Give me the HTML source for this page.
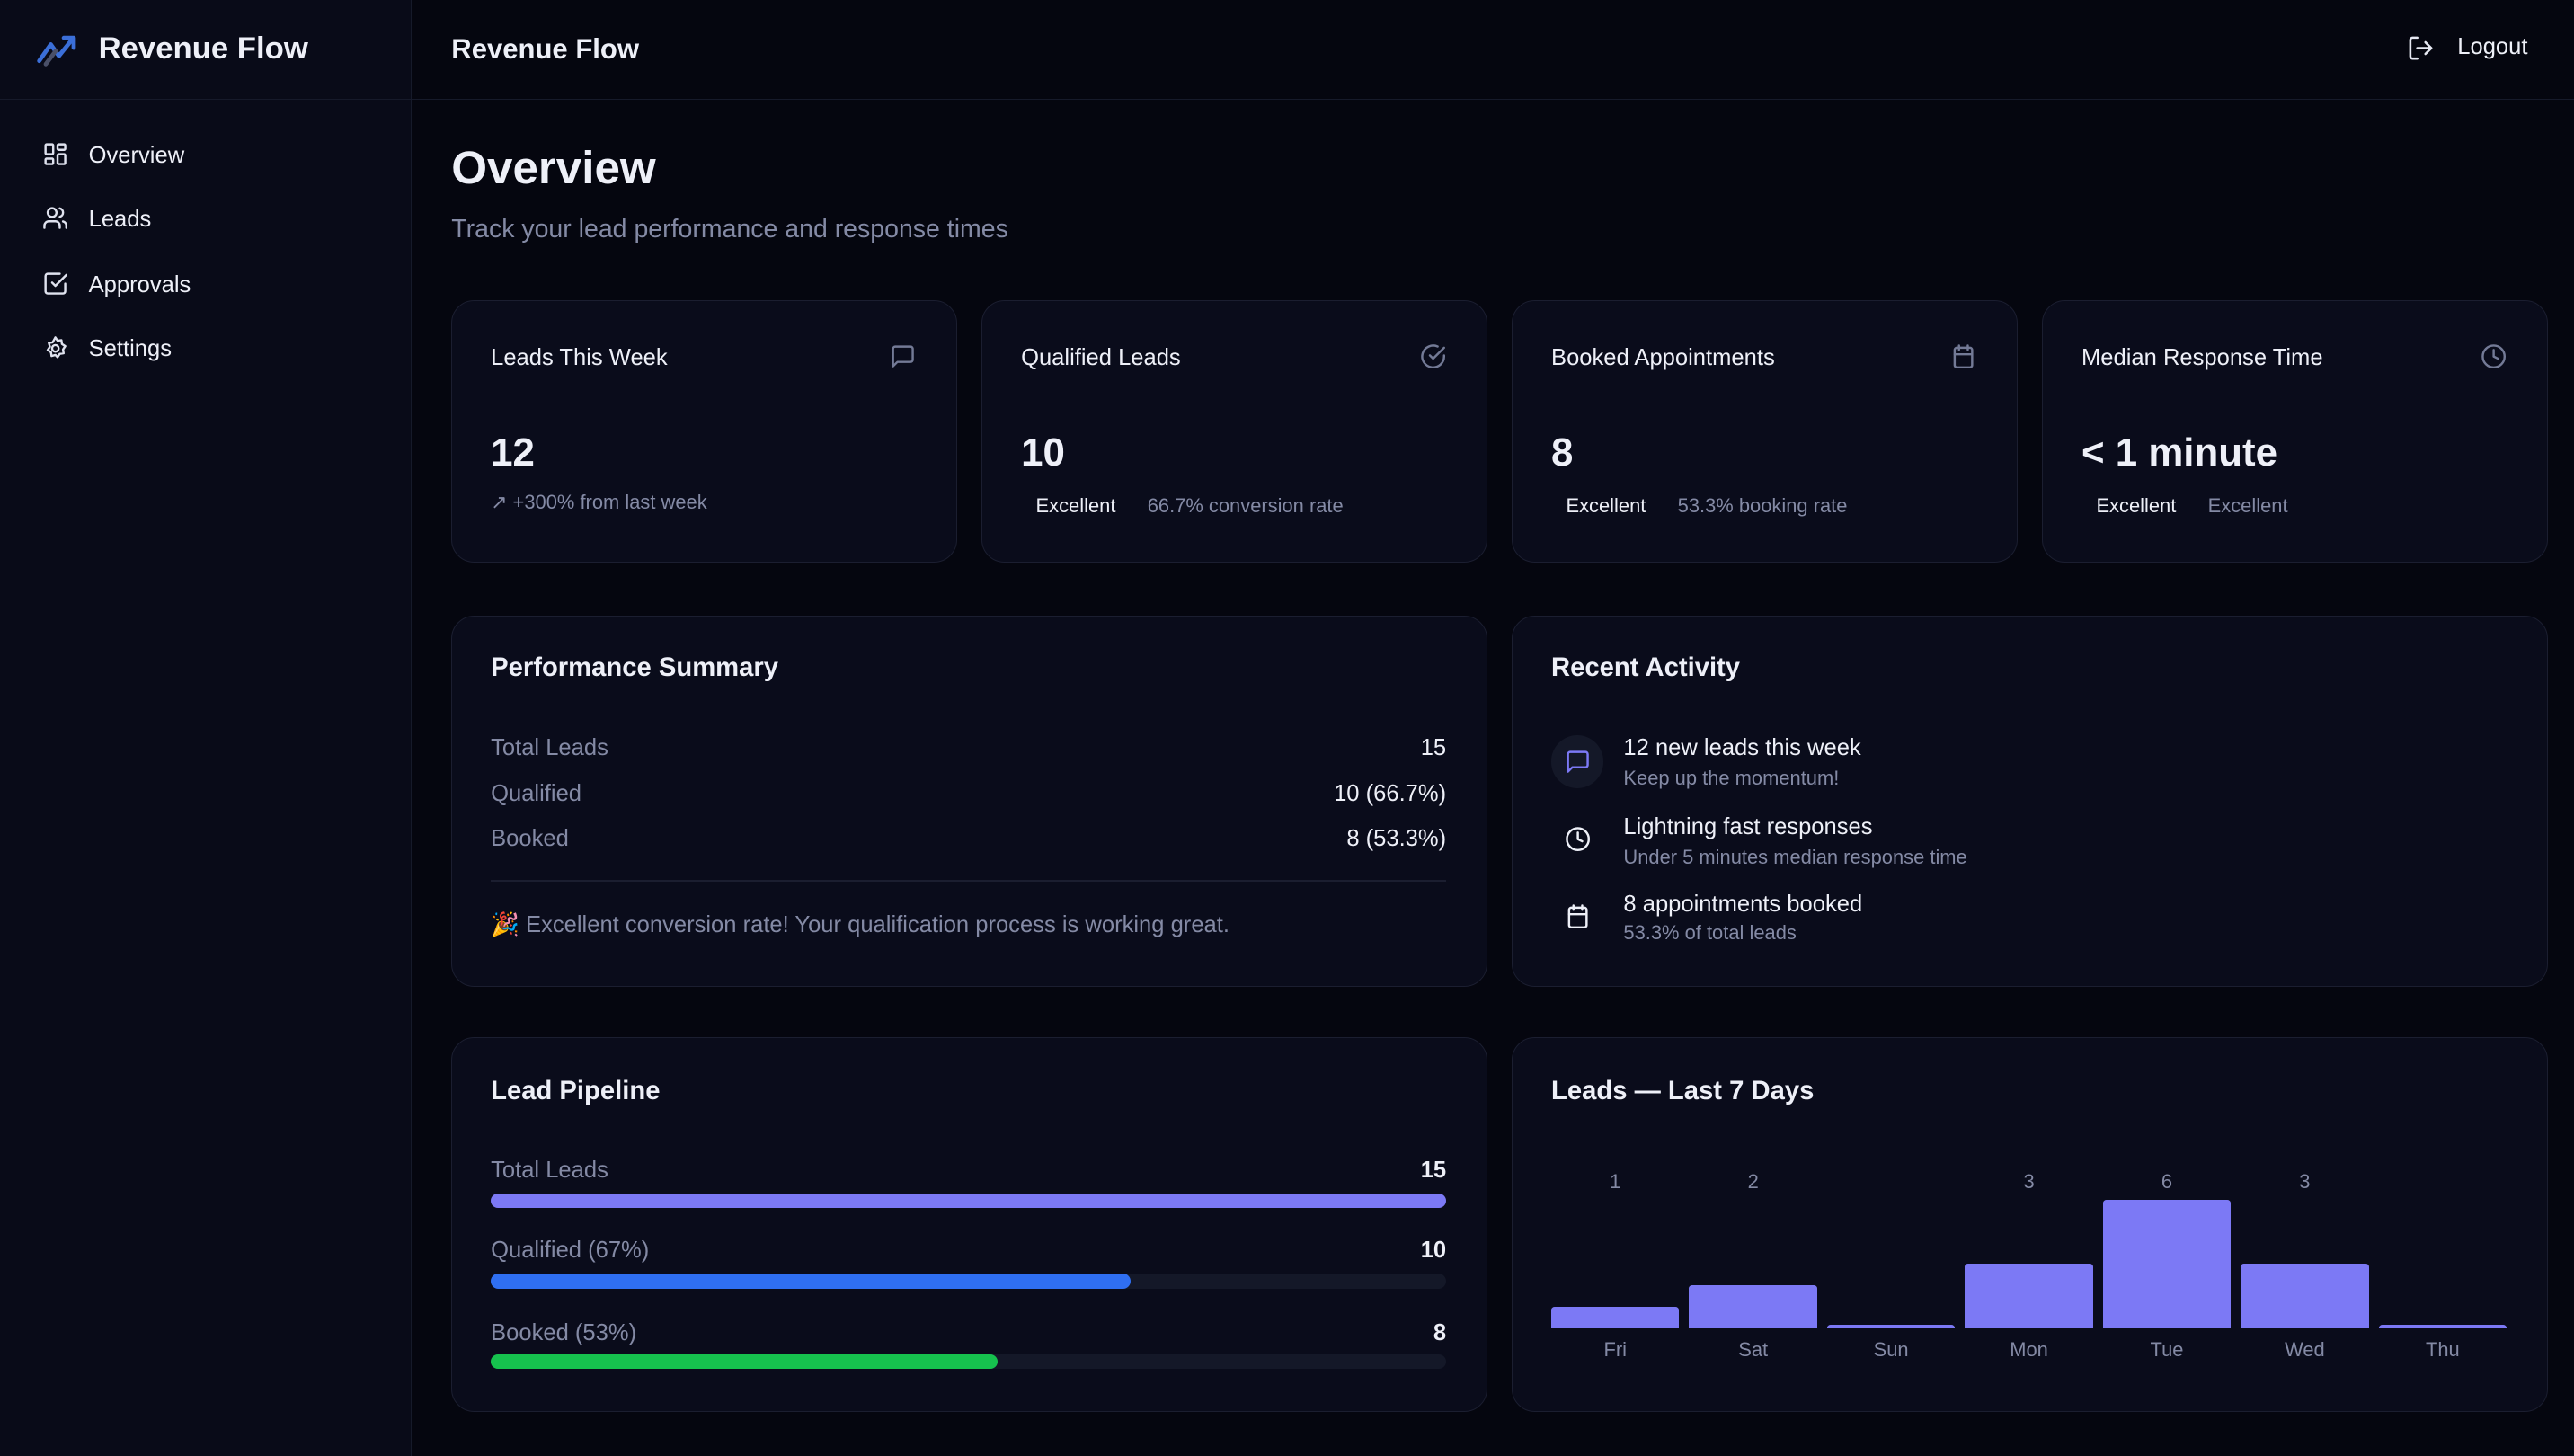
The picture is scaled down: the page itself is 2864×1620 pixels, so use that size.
<!DOCTYPE html>
<html><head><meta charset="utf-8"><style>
html{zoom:1.8265}
*{box-sizing:border-box;margin:0;padding:0}
body{width:1568px;height:887px;background:#05060f;font-family:"Liberation Sans",sans-serif;color:#eef0f8;position:relative;overflow:hidden}
.a{position:absolute;white-space:nowrap}
.side{position:absolute;left:0;top:0;width:251px;height:887px;background:#090b18;border-right:1px solid #161a2a}
.hdr{position:absolute;left:251px;top:0;right:0;height:61px;border-bottom:1px solid #161a2a;background:#05060f}
.sidehdr{position:absolute;left:0;top:0;width:251px;height:61px;border-bottom:1px solid #161a2a}
.card{position:absolute;background:#0a0c1b;border:1px solid #1b1e30;border-radius:14px}
.mut{color:#848aa5}
svg{position:absolute;fill:none;stroke-linecap:round;stroke-linejoin:round}
.nav{font-size:14px;color:#eef0f8}
.ct{font-size:14px;font-weight:400}
.h{font-size:16px;font-weight:600}
.row{font-size:14px}
.track{position:absolute;left:299px;width:582px;height:9px;border-radius:5px;background:#141828}
.bar{position:absolute;background:#7c79f5;width:78px;border-radius:2px 2px 0 0}
.n{font-size:12px;color:#848aa5;transform:translateX(-50%)}
</style></head><body>
<div class="side"><div class="sidehdr"></div></div>
<div class="hdr"></div>
<svg style="left:22px;top:18px" width="28" height="24" viewBox="0 0 28 24" stroke-width="2.6"><path d="M2 19 L9 9 L14 16 L22 6" stroke="#3b6fd8"/><path d="M17 5 H23 V11" stroke="#3b6fd8"/><path d="M6 21 L12 13" stroke="#4a5068"/></svg>
<div class="a" style="left:60px;top:19px;font-size:19px;font-weight:700">Revenue Flow</div>
<div class="a" style="left:275px;top:20px;font-size:17px;font-weight:600">Revenue Flow</div>
<svg style="left:1466px;top:21px" width="17" height="17" viewBox="0 0 24 24" stroke="#e6e8f2" stroke-width="2"><path d="M9 21H5a2 2 0 0 1-2-2V5a2 2 0 0 1 2-2h4M16 17l5-5-5-5M21 12H9"/></svg>
<div class="a" style="left:1497px;top:21px;font-size:14px">Logout</div>

<svg style="left:26px;top:86px" width="16" height="16" viewBox="0 0 24 24" stroke="#dfe2ee" stroke-width="2"><rect x="3" y="3" width="7" height="9" rx="1"/><rect x="14" y="3" width="7" height="5" rx="1"/><rect x="14" y="12" width="7" height="9" rx="1"/><rect x="3" y="16" width="7" height="5" rx="1"/></svg>
<div class="a nav" style="left:54px;top:87px">Overview</div>
<svg style="left:26px;top:125px" width="16" height="16" viewBox="0 0 24 24" stroke="#dfe2ee" stroke-width="2"><path d="M16 21v-2a4 4 0 0 0-4-4H6a4 4 0 0 0-4 4v2"/><circle cx="9" cy="7" r="4"/><path d="M22 21v-2a4 4 0 0 0-3-3.87M16 3.13a4 4 0 0 1 0 7.75"/></svg>
<div class="a nav" style="left:54px;top:126px">Leads</div>
<svg style="left:26px;top:165px" width="16" height="16" viewBox="0 0 24 24" stroke="#dfe2ee" stroke-width="2"><path d="M9 11l3 3L22 4"/><path d="M21 12v7a2 2 0 0 1-2 2H5a2 2 0 0 1-2-2V5a2 2 0 0 1 2-2h11"/></svg>
<div class="a nav" style="left:54px;top:166px">Approvals</div>
<svg style="left:26px;top:204px" width="16" height="16" viewBox="0 0 24 24" stroke="#dfe2ee" stroke-width="2"><circle cx="12" cy="12" r="3"/><path d="M12 2l2 3 3.5-.5.5 3.5 3 2-2 3 .5 3.5-3.5.5-2 3-2-2-3.5 1-.5-3.5-3-2 2-3-1-3.5 3.5-.5z"/></svg>
<div class="a nav" style="left:54px;top:205px">Settings</div>

<div class="a" style="left:275px;top:86px;font-size:28px;font-weight:700">Overview</div>
<div class="a mut" style="left:275px;top:131px;font-size:15.6px">Track your lead performance and response times</div>

<div class="card" style="left:275px;top:183px;width:308px;height:160px"></div>
<div class="card" style="left:598px;top:183px;width:308px;height:160px"></div>
<div class="card" style="left:921px;top:183px;width:308px;height:160px"></div>
<div class="card" style="left:1244px;top:183px;width:308px;height:160px"></div>

<div class="a ct" style="left:299px;top:210px">Leads This Week</div>
<svg style="left:542px;top:209px" width="16" height="16" viewBox="0 0 24 24" stroke="#737a96" stroke-width="2"><path d="M21 15a2 2 0 0 1-2 2H7l-4 4V5a2 2 0 0 1 2-2h14a2 2 0 0 1 2 2z"/></svg>
<div class="a" style="left:299px;top:262px;font-size:24px;font-weight:700">12</div>
<div class="a mut" style="left:299px;top:299px;font-size:12px">↗ +300% from last week</div>

<div class="a ct" style="left:622px;top:210px">Qualified Leads</div>
<svg style="left:865px;top:209px" width="16" height="16" viewBox="0 0 24 24" stroke="#737a96" stroke-width="2"><path d="M22 11.1V12a10 10 0 1 1-5.9-9.1"/><path d="M22 4L12 14l-3-3"/></svg>
<div class="a" style="left:622px;top:262px;font-size:24px;font-weight:700">10</div>
<div class="a" style="left:631px;top:301px;font-size:12px">Excellent</div>
<div class="a mut" style="left:699px;top:301px;font-size:12px">66.7% conversion rate</div>

<div class="a ct" style="left:945px;top:210px">Booked Appointments</div>
<svg style="left:1188px;top:209px" width="16" height="16" viewBox="0 0 24 24" stroke="#737a96" stroke-width="2"><rect x="4" y="4" width="16" height="18" rx="2"/><path d="M16 2v4M8 2v4M4 10h16"/></svg>
<div class="a" style="left:945px;top:262px;font-size:24px;font-weight:700">8</div>
<div class="a" style="left:954px;top:301px;font-size:12px">Excellent</div>
<div class="a mut" style="left:1022px;top:301px;font-size:12px">53.3% booking rate</div>

<div class="a ct" style="left:1268px;top:210px">Median Response Time</div>
<svg style="left:1511px;top:209px" width="16" height="16" viewBox="0 0 24 24" stroke="#737a96" stroke-width="2"><circle cx="12" cy="12" r="10"/><path d="M12 6v6l4 2"/></svg>
<div class="a" style="left:1268px;top:262px;font-size:24px;font-weight:700">&lt; 1 minute</div>
<div class="a" style="left:1277px;top:301px;font-size:12px">Excellent</div>
<div class="a mut" style="left:1345px;top:301px;font-size:12px">Excellent</div>

<div class="card" style="left:275px;top:375px;width:631px;height:226px"></div>
<div class="a h" style="left:299px;top:398px">Performance Summary</div>
<div class="a row mut" style="left:299px;top:448px">Total Leads</div><div class="a row" style="right:687px;top:448px">15</div>
<div class="a row mut" style="left:299px;top:476px">Qualified</div><div class="a row" style="right:687px;top:476px">10 (66.7%)</div>
<div class="a row mut" style="left:299px;top:503px">Booked</div><div class="a row" style="right:687px;top:503px">8 (53.3%)</div>
<div class="a" style="left:299px;top:536px;width:582px;height:1px;background:#1b1e30"></div>
<div class="a row mut" style="left:299px;top:555px">🎉 Excellent conversion rate! Your qualification process is working great.</div>

<div class="card" style="left:921px;top:375px;width:631px;height:226px"></div>
<div class="a h" style="left:945px;top:398px">Recent Activity</div>
<div class="a" style="left:945px;top:448px;width:32px;height:32px;border-radius:50%;background:#141828"></div>
<svg style="left:953px;top:456px" width="16" height="16" viewBox="0 0 24 24" stroke="#7c79f5" stroke-width="2"><path d="M21 15a2 2 0 0 1-2 2H7l-4 4V5a2 2 0 0 1 2-2h14a2 2 0 0 1 2 2z"/></svg>
<div class="a" style="left:989px;top:448px;font-size:14px">12 new leads this week</div>
<div class="a mut" style="left:989px;top:467px;font-size:12px">Keep up the momentum!</div>
<svg style="left:953px;top:503px" width="16" height="16" viewBox="0 0 24 24" stroke="#eef0f8" stroke-width="2"><circle cx="12" cy="12" r="10"/><path d="M12 6v6l4 2"/></svg>
<div class="a" style="left:989px;top:496px;font-size:14px">Lightning fast responses</div>
<div class="a mut" style="left:989px;top:515px;font-size:12px">Under 5 minutes median response time</div>
<svg style="left:953px;top:550px" width="16" height="16" viewBox="0 0 24 24" stroke="#eef0f8" stroke-width="2"><rect x="4" y="4" width="16" height="18" rx="2"/><path d="M16 2v4M8 2v4M4 10h16"/></svg>
<div class="a" style="left:989px;top:543px;font-size:14px">8 appointments booked</div>
<div class="a mut" style="left:989px;top:561px;font-size:12px">53.3% of total leads</div>

<div class="card" style="left:275px;top:632px;width:631px;height:228px"></div>
<div class="a h" style="left:299px;top:656px">Lead Pipeline</div>
<div class="a row mut" style="left:299px;top:705px">Total Leads</div><div class="a row" style="right:687px;top:705px;font-weight:600">15</div>
<div class="track" style="top:727px;background:#7c79f5"></div>
<div class="a row mut" style="left:299px;top:754px">Qualified (67%)</div><div class="a row" style="right:687px;top:754px;font-weight:600">10</div>
<div class="track" style="top:776px"></div><div class="track" style="top:776px;width:390px;background:#2f6ff2"></div>
<div class="a row mut" style="left:299px;top:804px">Booked (53%)</div><div class="a row" style="right:687px;top:804px;font-weight:600">8</div>
<div class="track" style="top:825px"></div><div class="track" style="top:825px;width:309px;background:#16c24e"></div>

<div class="card" style="left:921px;top:632px;width:631px;height:228px"></div>
<div class="a h" style="left:945px;top:656px">Leads — Last 7 Days</div>
<div class="bar" style="left:945px;top:796px;height:13px"></div>
<div class="bar" style="left:1029px;top:783px;height:26px"></div>
<div class="bar" style="left:1113px;top:807px;height:2px"></div>
<div class="bar" style="left:1197px;top:770px;height:39px"></div>
<div class="bar" style="left:1281px;top:731px;height:78px"></div>
<div class="bar" style="left:1365px;top:770px;height:39px"></div>
<div class="bar" style="left:1449px;top:807px;height:2px"></div>
<div class="a n" style="left:984px;top:713px">1</div>
<div class="a n" style="left:1068px;top:713px">2</div>
<div class="a n" style="left:1236px;top:713px">3</div>
<div class="a n" style="left:1320px;top:713px">6</div>
<div class="a n" style="left:1404px;top:713px">3</div>
<div class="a n" style="left:984px;top:815px">Fri</div>
<div class="a n" style="left:1068px;top:815px">Sat</div>
<div class="a n" style="left:1152px;top:815px">Sun</div>
<div class="a n" style="left:1236px;top:815px">Mon</div>
<div class="a n" style="left:1320px;top:815px">Tue</div>
<div class="a n" style="left:1404px;top:815px">Wed</div>
<div class="a n" style="left:1488px;top:815px">Thu</div>
</body></html>
